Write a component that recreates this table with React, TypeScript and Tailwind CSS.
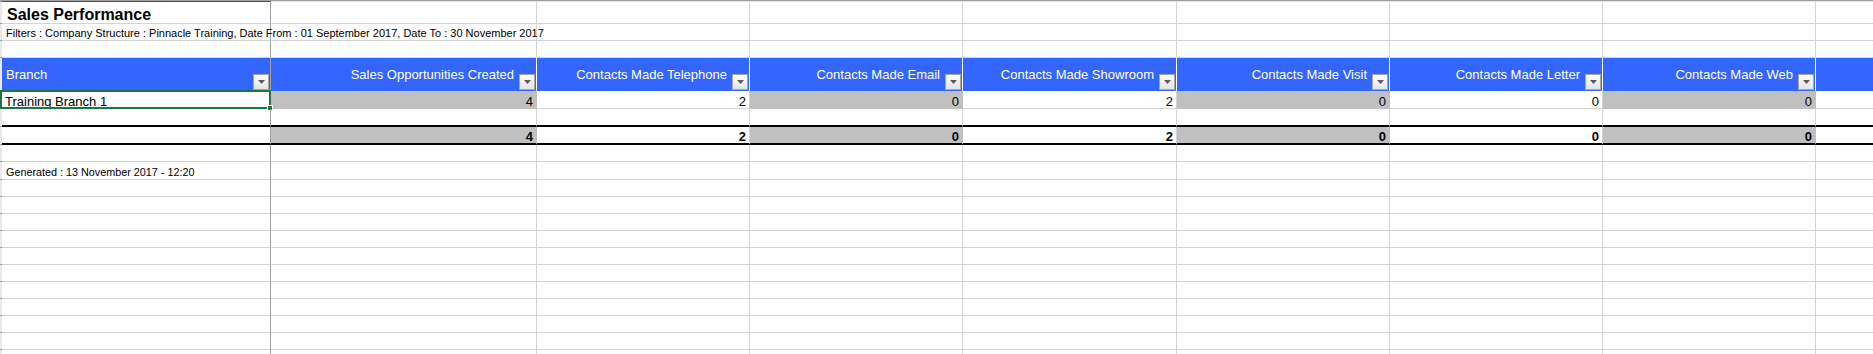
import React from "react";

const GRID =
  "grid grid-cols-[2px_269px_266px_213px_213px_214px_213px_213px_213px_1fr]";
const GL = "border-[#d4d4d4]";

function DropBtn() {
  return (
    <div className="mb-[1px] mr-[1px] flex h-[16px] w-[16px] shrink-0 items-center justify-center self-end border border-[#a6a6a6] bg-linear-to-b from-white to-[#e4e4e4]">
      <svg width="7" height="4" viewBox="0 0 7 4">
        <path d="M0 0h7L3.5 4z" fill="#5a5a5a" />
      </svg>
    </div>
  );
}

function Strip({ green = false }: { green?: boolean }) {
  return <div className={green ? "bg-[#217346]" : "border-b border-[#9f9f9f] bg-[#e9e9e9]"} />;
}

type Cell = { text?: string; gray?: boolean; bold?: boolean; left?: boolean };

function Row({
  h,
  cells,
  thick = false,
  aText,
  aClass = "",
}: {
  h: string;
  cells?: Cell[];
  thick?: boolean;
  aText?: React.ReactNode;
  aClass?: string;
}) {
  const bottom = thick ? "border-b-2 border-b-black" : "border-b";
  const list: Cell[] = cells ?? Array.from({ length: 7 }, () => ({}));
  return (
    <div className={`${GRID} ${h}`}>
      <Strip />
      <div
        className={`relative flex items-end overflow-visible whitespace-nowrap border-r border-r-[#9f9f9f] ${bottom} ${GL} ${thick ? "border-b-black" : ""} ${aClass}`}
      >
        {aText}
      </div>
      {list.map((c, i) => (
        <div
          key={i}
          className={`flex items-end justify-end pr-[3px] text-[13px] leading-none text-black ${
            c.gray ? "border-[#c0c0c0] bg-[#c0c0c0]" : GL
          } border-r ${bottom} ${thick ? "border-b-black" : ""} ${c.bold ? "font-bold" : ""}`}
        >
          {c.text}
        </div>
      ))}
      <div className={`${bottom} ${GL} ${thick ? "border-b-black" : ""}`} />
    </div>
  );
}

const headers = [
  "Sales Opportunities Created",
  "Contacts Made Telephone",
  "Contacts Made Email",
  "Contacts Made Showroom",
  "Contacts Made Visit",
  "Contacts Made Letter",
  "Contacts Made Web",
];

const vals = ["4", "2", "0", "2", "0", "0", "0"];

export default function App() {
  return (
    <div className="h-[354px] w-[1873px] overflow-hidden bg-white font-['Liberation_Sans',Arial,sans-serif]">
      {/* top edge (column header bottom) */}
      <div className={`${GRID} h-[2px]`}>
        <div className="bg-[#9f9f9f]" />
        <div className="border-t border-[#9f9f9f] bg-[#217346]" />
        <div className="col-span-8 border-t border-[#9f9f9f] bg-[#e6e6e6]" />
      </div>

      <Row
        h="h-[22px]"
        aClass="pl-[5px]"
        aText={<span className="text-[16px] font-bold leading-none">Sales Performance</span>}
      />
      <Row
        h="h-[17px]"
        aClass="pl-[4px] pb-[1px]"
        aText={
          <span className="text-[11px] leading-none">
            Filters : Company Structure : Pinnacle Training, Date From : 01 September 2017, Date To : 30 November 2017
          </span>
        }
      />
      <Row h="h-[17px]" />

      {/* header row */}
      <div className={`${GRID} h-[33px]`}>
        <Strip />
        <div className="flex items-center justify-between border-r border-r-[#9f9f9f] bg-[#3366ff] pl-[4px]">
          <span className="text-[13px] leading-none text-white">Branch</span>
          <DropBtn />
        </div>
        {headers.map((h) => (
          <div
            key={h}
            className="flex items-center justify-end border-r border-white bg-[#3366ff]"
          >
            <span className="mr-[5px] whitespace-nowrap text-[13px] leading-none text-white">{h}</span>
            <DropBtn />
          </div>
        ))}
        <div className="bg-[#3366ff]" />
      </div>

      {/* data row */}
      <div className={`${GRID} h-[18px]`}>
        <div className="bg-[#217346]" />
        <div className={`relative flex items-end border-r border-b border-r-[#9f9f9f] ${GL} pl-[3px]`}>
          <span className="text-[13px] leading-none text-black">Training Branch 1</span>
          <div className="pointer-events-none absolute -top-[1px] -left-[2px] -right-[1px] -bottom-[1px] border-2 border-[#217346]" />
          <div className="absolute -right-[3px] -bottom-[3px] h-[6px] w-[6px] border border-white bg-[#217346]" />
        </div>
        {vals.map((v, i) => (
          <div
            key={i}
            className={`flex items-end justify-end pr-[3px] text-[13px] leading-none text-black ${
              i % 2 === 0 ? "border-[#c0c0c0] bg-[#c0c0c0]" : GL
            } border-r border-b`}
          >
            {v}
          </div>
        ))}
        <div className={`border-b ${GL}`} />
      </div>

      <Row h="h-[18px]" thick />
      <Row
        h="h-[18px]"
        thick
        cells={vals.map((v, i) => ({ text: v, gray: i % 2 === 0, bold: true }))}
      />
      <Row h="h-[17px]" />
      <Row
        h="h-[18px]"
        aClass="pl-[4px] pb-[1px]"
        aText={<span className="text-[10.8px] leading-none">Generated : 13 November 2017 - 12:20</span>}
      />
      {Array.from({ length: 12 }, (_, i) => (
        <Row key={i} h="h-[17px]" />
      ))}
    </div>
  );
}
